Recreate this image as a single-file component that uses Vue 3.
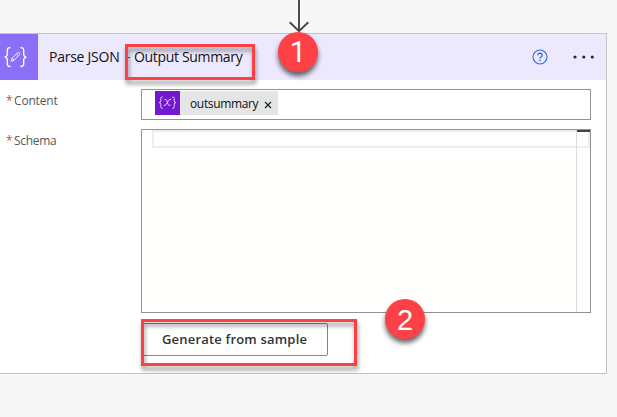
<script setup>
const title = ['Parse JSON', '-', 'Output Summary']
</script>

<template>
  <main class="canvas">
    <div class="connector">
      <svg class="arrow" width="22" height="33" viewBox="0 0 22 33">
        <path d="M11 0V31M1.7 22.2L11 31.2L20.3 22.2" fill="none" stroke="#4b4b4d" stroke-width="2" />
      </svg>
    </div>
    <section class="card">
      <header class="head">
        <div class="action-icon">
          <svg width="38" height="46" viewBox="0 0 38 46" fill="none" stroke="#fff">
            <path d="M10.6 13.7H9.8Q7.3 13.7 7.3 16.2V20.1Q7.3 22.9 4.6 23.1Q7.3 23.3 7.3 26.1V30Q7.3 32.5 9.8 32.5H10.6M20.4 13.7H21.2Q23.7 13.7 23.7 16.2V20.1Q23.7 22.9 26.4 23.1Q23.7 23.3 23.7 26.1V30Q23.7 32.5 21.2 32.5H20.4" stroke-width="1.3" />
            <path d="M11.4 27.3L12.2 24.2L17.5 18.8Q18.5 18.1 19.3 18.9Q20.1 19.8 19.4 20.7L14.1 26.2ZM16.5 19.9L18.4 21.7M12.2 24.2L14.1 26.2" stroke-width=".9" />
          </svg>
        </div>
        <h1 class="title">
          <span class="t-name">{{ title[0] }}</span>
          <span class="t-dash">{{ title[1] }}</span>
          <span class="t-sub">{{ title[2] }}</span>
        </h1>
        <svg class="help" width="16" height="16" viewBox="0 0 16 16" fill="none" stroke="#2f67ee">
          <circle cx="8" cy="8" r="7" stroke-width="1.1" />
          <path d="M5.8 6.3Q5.9 4.2 8 4.2Q10.2 4.3 10.2 6.2Q10.2 7.2 9 8Q8 8.7 8 9.8" stroke-width="1.2" />
          <circle cx="8" cy="11.6" r=".8" fill="#2f67ee" stroke="none" />
        </svg>
        <svg class="more" width="24" height="6" viewBox="0 0 24 6" fill="#29282d">
          <circle cx="3" cy="3" r="1.6" /><circle cx="11.8" cy="3" r="1.6" /><circle cx="20.3" cy="3" r="1.6" />
        </svg>
      </header>
      <div class="body">
        <div class="row">
          <label class="label"><span class="req">*</span><span class="content-text">Content</span></label>
          <div class="field">
            <div class="token">
              <div class="token-icon">
                <svg width="25" height="24" viewBox="0 0 25 24" fill="none" stroke="#e8d5fa" stroke-width="1">
                  <path d="M7.8 6H7.2Q5.8 6 5.8 7.5V9.8Q5.8 11.5 4 11.6Q5.8 11.7 5.8 13.4V15.7Q5.8 17.3 7.2 17.3H7.8M17.2 6H17.8Q19.2 6 19.2 7.5V9.8Q19.2 11.5 21 11.6Q19.2 11.7 19.2 13.4V15.7Q19.2 17.3 17.8 17.3H17.2" />
                  <path d="M9.4 8.9Q11.1 7.4 11.8 9.5L13 13.3Q13.6 15.6 15.4 13.7M16.2 8.3Q15 7.8 13.8 9.4L11.1 13.3Q10 14.9 8.8 14.4" />
                </svg>
              </div>
              <span class="token-text">outsummary</span>
              <svg class="close" width="8" height="8" viewBox="0 0 8 8"><path d="M1 1L7 7M7 1L1 7" stroke="#222" stroke-width="1.2" /></svg>
            </div>
          </div>
        </div>
        <div class="row schema-row">
          <label class="label"><span class="req">*</span><span class="schema-text">Schema</span></label>
          <div class="editor">
            <div class="lines"><div class="current-line"></div></div>
            <div class="ruler"><div class="cursor-mark"></div><div class="line-end"></div></div>
          </div>
        </div>
        <button class="sample"><span>Generate from sample</span></button>
      </div>
    </section>
    <div class="outline outline-one"></div>
    <div class="outline outline-two"></div>
    <div class="badge badge-one">1</div>
    <div class="badge badge-two">2</div>
  </main>
</template>

<style>
body { margin: 0; overflow: hidden; }
</style>

<style scoped>
* { box-sizing: border-box; }
.canvas { position: relative; width: 617px; height: 417px; overflow: hidden; background: #f7f7f7; font-family: "Open Sans", "Noto Sans", sans-serif; color: #111; }
.connector { height: 33px; padding-left: 288px; }
.arrow { display: block; }
.card { width: 607px; height: 341px; border: 1px solid #c3c3c3; border-left: 0; background: #fff; }
.head { display: flex; align-items: center; height: 46px; background: #ece8fd; }
.action-icon { width: 38px; height: 46px; background: #8b6ff7; }
.action-icon svg { display: block; }
.title { display: flex; width: 494px; margin: 0; padding-left: 11px; font-size: 14px; line-height: 20px; font-weight: 400; white-space: nowrap; }
.t-name { width: 77px; letter-spacing: -.25px; }
.t-dash { width: 8px; color: #665f79; }
.t-sub { letter-spacing: -.33px; }
.help { display: block; }
.more { display: block; margin-left: 24px; }
.body { padding-top: 9px; }
.row { display: flex; }
.label { display: flex; width: 141px; padding: 3px 0 0 6px; font-size: 12px; line-height: 17px; color: #565656; }
.req { width: 8px; color: #d6452f; }
.content-text { letter-spacing: -.18px; }
.schema-text { letter-spacing: -.3px; }
.field { width: 450px; height: 31px; padding: 1px 0 0 13px; border: 1px solid #939393; }
.token { display: flex; align-items: center; width: 123px; height: 24px; background: #e4e5e5; font-size: 12px; line-height: 18px; }
.token-icon { width: 25px; height: 24px; background: #7218cf; }
.token-icon svg { display: block; }
.token-text { width: 74px; padding: 2px 0 0 10px; letter-spacing: -.35px; }
.close { margin: 4px 0 0 10px; }
.schema-row { margin-top: 9px; }
.editor { display: flex; width: 450px; height: 184px; border: 1px solid #939393; background: #fffffd; }
.lines { width: 434px; padding-left: 10px; }
.current-line { height: 18px; border: 2px solid #eee; border-right: 0; }
.ruler { width: 14px; border-left: 1px solid #ddd; }
.cursor-mark { height: 2px; background: #444; }
.line-end { height: 16px; border-right: 2px solid #eee; border-bottom: 2px solid #eee; }
.sample { display: block; width: 187px; height: 33px; margin: 10px 0 0 141px; padding: 0 0 2px 20px; border: 1px solid #858585; border-radius: 2px; background: #fff; color: #333; font: 600 13px/20px "Open Sans", sans-serif; text-align: left; letter-spacing: .19px; white-space: nowrap; }
.outline { position: absolute; border: 3px solid #fb4144; filter: drop-shadow(1px 4px 2px rgba(0, 0, 0, .42)); }
.outline-one { left: 125px; top: 44px; width: 130px; height: 36px; }
.outline-two { left: 141px; top: 319px; width: 216px; height: 47px; }
.badge { position: absolute; display: flex; align-items: center; justify-content: center; width: 40px; height: 40px; border-radius: 50%; background: #fd4146; box-shadow: 0 4px 5px rgba(0, 0, 0, .6); color: #fff; font: 29px/40px "Liberation Sans", sans-serif; }
.badge-one { left: 278px; top: 32px; font-family: Roboto, sans-serif; }
.badge-two { left: 385px; top: 299px; padding-top: 2px; }
</style>
